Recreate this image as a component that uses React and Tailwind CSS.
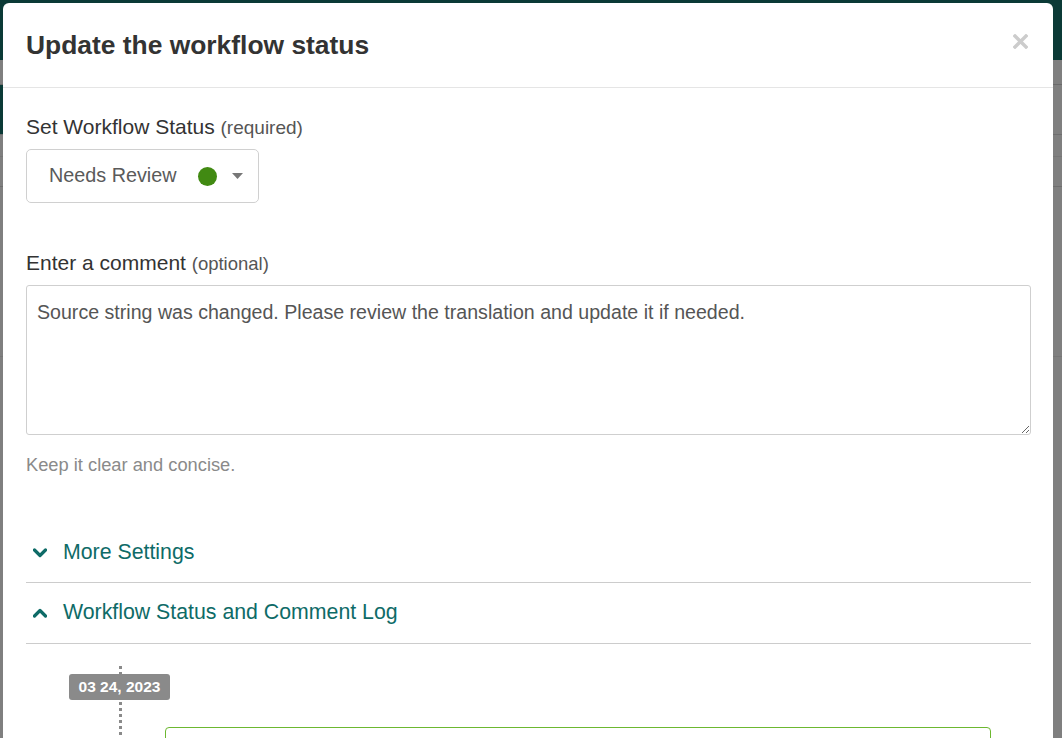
import React from "react";

function Chevron({ up }) {
  return (
    <svg width="14" height="10" viewBox="0 0 14 10" className="shrink-0">
      {up ? (
        <polyline points="1.5,8 7,2.5 12.5,8" fill="none" stroke="#0e6b67" strokeWidth="3.2" strokeLinecap="round" strokeLinejoin="round" />
      ) : (
        <polyline points="1.5,2 7,7.5 12.5,2" fill="none" stroke="#0e6b67" strokeWidth="3.2" strokeLinecap="round" strokeLinejoin="round" />
      )}
    </svg>
  );
}

export default function App() {
  const font = { fontFamily: '"Liberation Sans", Arial, Helvetica, sans-serif' };
  return (
    <div className="relative w-[1062px] h-[738px] overflow-hidden bg-[#7f7f7f]" style={font}>
      {/* dimmed page behind */}
      <div className="flex flex-col">
        <div className="h-[60px] bg-[#0b3a36]" />
        <div className="h-[25px] border-b border-[#6a6a6a]" />
        <div className="h-[50px] flex border-b border-[#6e6e6e]">
          <div className="w-[40px] bg-[#0b3a36]" />
          <div className="flex-1" />
        </div>
        <div className="h-[22px] border-b border-[#767676]" />
        <div className="h-[30px] border-b border-[#6e6e6e]" />
        <div className="h-[170px] border-b border-[#767676]" />
      </div>

      {/* modal */}
      <div className="absolute left-[3px] top-[3px] w-[1050px] bottom-0 bg-white rounded-t-[6px] flex flex-col overflow-hidden">
        <div className="shrink-0 h-[85px] border-b border-[#e5e5e5] px-[23px] flex items-center justify-between">
          <h1 className="text-[26.4px] leading-[30px] font-bold text-[#333]">Update the workflow status</h1>
          <svg width="15" height="15" viewBox="0 0 15 15" className="mr-[2px] -mt-[8px]">
            <line x1="2" y1="2" x2="13" y2="13" stroke="#cccccc" strokeWidth="3.4" strokeLinecap="square" />
            <line x1="13" y1="2" x2="2" y2="13" stroke="#cccccc" strokeWidth="3.4" strokeLinecap="square" />
          </svg>
        </div>

        <div className="shrink-0 px-[23px] pt-[27px] flex flex-col">
          <div className="text-[21px] leading-[24px] text-[#333] whitespace-nowrap">
            Set Workflow Status <span className="text-[#555] text-[19px]">(required)</span>
          </div>
          <div className="mt-[9px] w-[233px] h-[54px] border border-[#d0d0d0] rounded-[5px] flex items-center pl-[22px] pr-[15px]">
            <span className="text-[19.8px] text-[#5a5a5a]">Needs Review</span>
            <span className="ml-auto w-[19px] h-[19px] rounded-full bg-[#418a12]" />
            <svg width="11" height="6" viewBox="0 0 11 6" className="ml-[15px]">
              <polygon points="0,0 11,0 5.5,6" fill="#777" />
            </svg>
          </div>

          <div className="mt-[48px] text-[21px] leading-[24px] text-[#333] whitespace-nowrap">
            Enter a comment <span className="text-[#555] text-[18.5px]">(optional)</span>
          </div>
          <textarea
            className="mt-[9px] w-[1005px] h-[150px] border border-[#cfcfcf] rounded-[3px] px-[10px] pt-[15px] text-[19.6px] leading-[23px] text-[#555] outline-none"
            defaultValue="Source string was changed. Please review the translation and update it if needed."
            style={font}
          />
          <div className="mt-[20px] text-[18.3px] leading-[20px] text-[#8a8a8a]">Keep it clear and concise.</div>

          <div className="mt-[48px] h-[60px] w-[1005px] border-b border-[#cccccc] flex items-center">
            <div className="pl-[7px] w-[37px] flex items-center">
              <Chevron />
            </div>
            <span className="text-[21.3px] text-[#0e6b67]">More Settings</span>
          </div>
          <div className="h-[61px] w-[1005px] border-b border-[#cccccc] flex items-center">
            <div className="pl-[7px] w-[37px] flex items-center">
              <Chevron up />
            </div>
            <span className="text-[21.3px] text-[#0e6b67]">Workflow Status and Comment Log</span>
          </div>

          <div className="relative w-[1005px] pt-[30px] pb-[20px]">
            <div className="absolute left-[93px] top-[22px] bottom-0 border-l-[3px] border-dotted border-[#8a8a8a]" />
            <div className="relative ml-[43px] w-[101px] h-[26px] rounded-[3px] bg-[#8a8a8a] flex items-center justify-center text-white text-[15.5px] font-bold whitespace-nowrap">
              03 24, 2023
            </div>
            <div className="relative mt-[27px] ml-[139px] mr-[40px] h-[60px] border border-[#6cb830] rounded-t-[4px] bg-white" />
          </div>
        </div>
      </div>
    </div>
  );
}
